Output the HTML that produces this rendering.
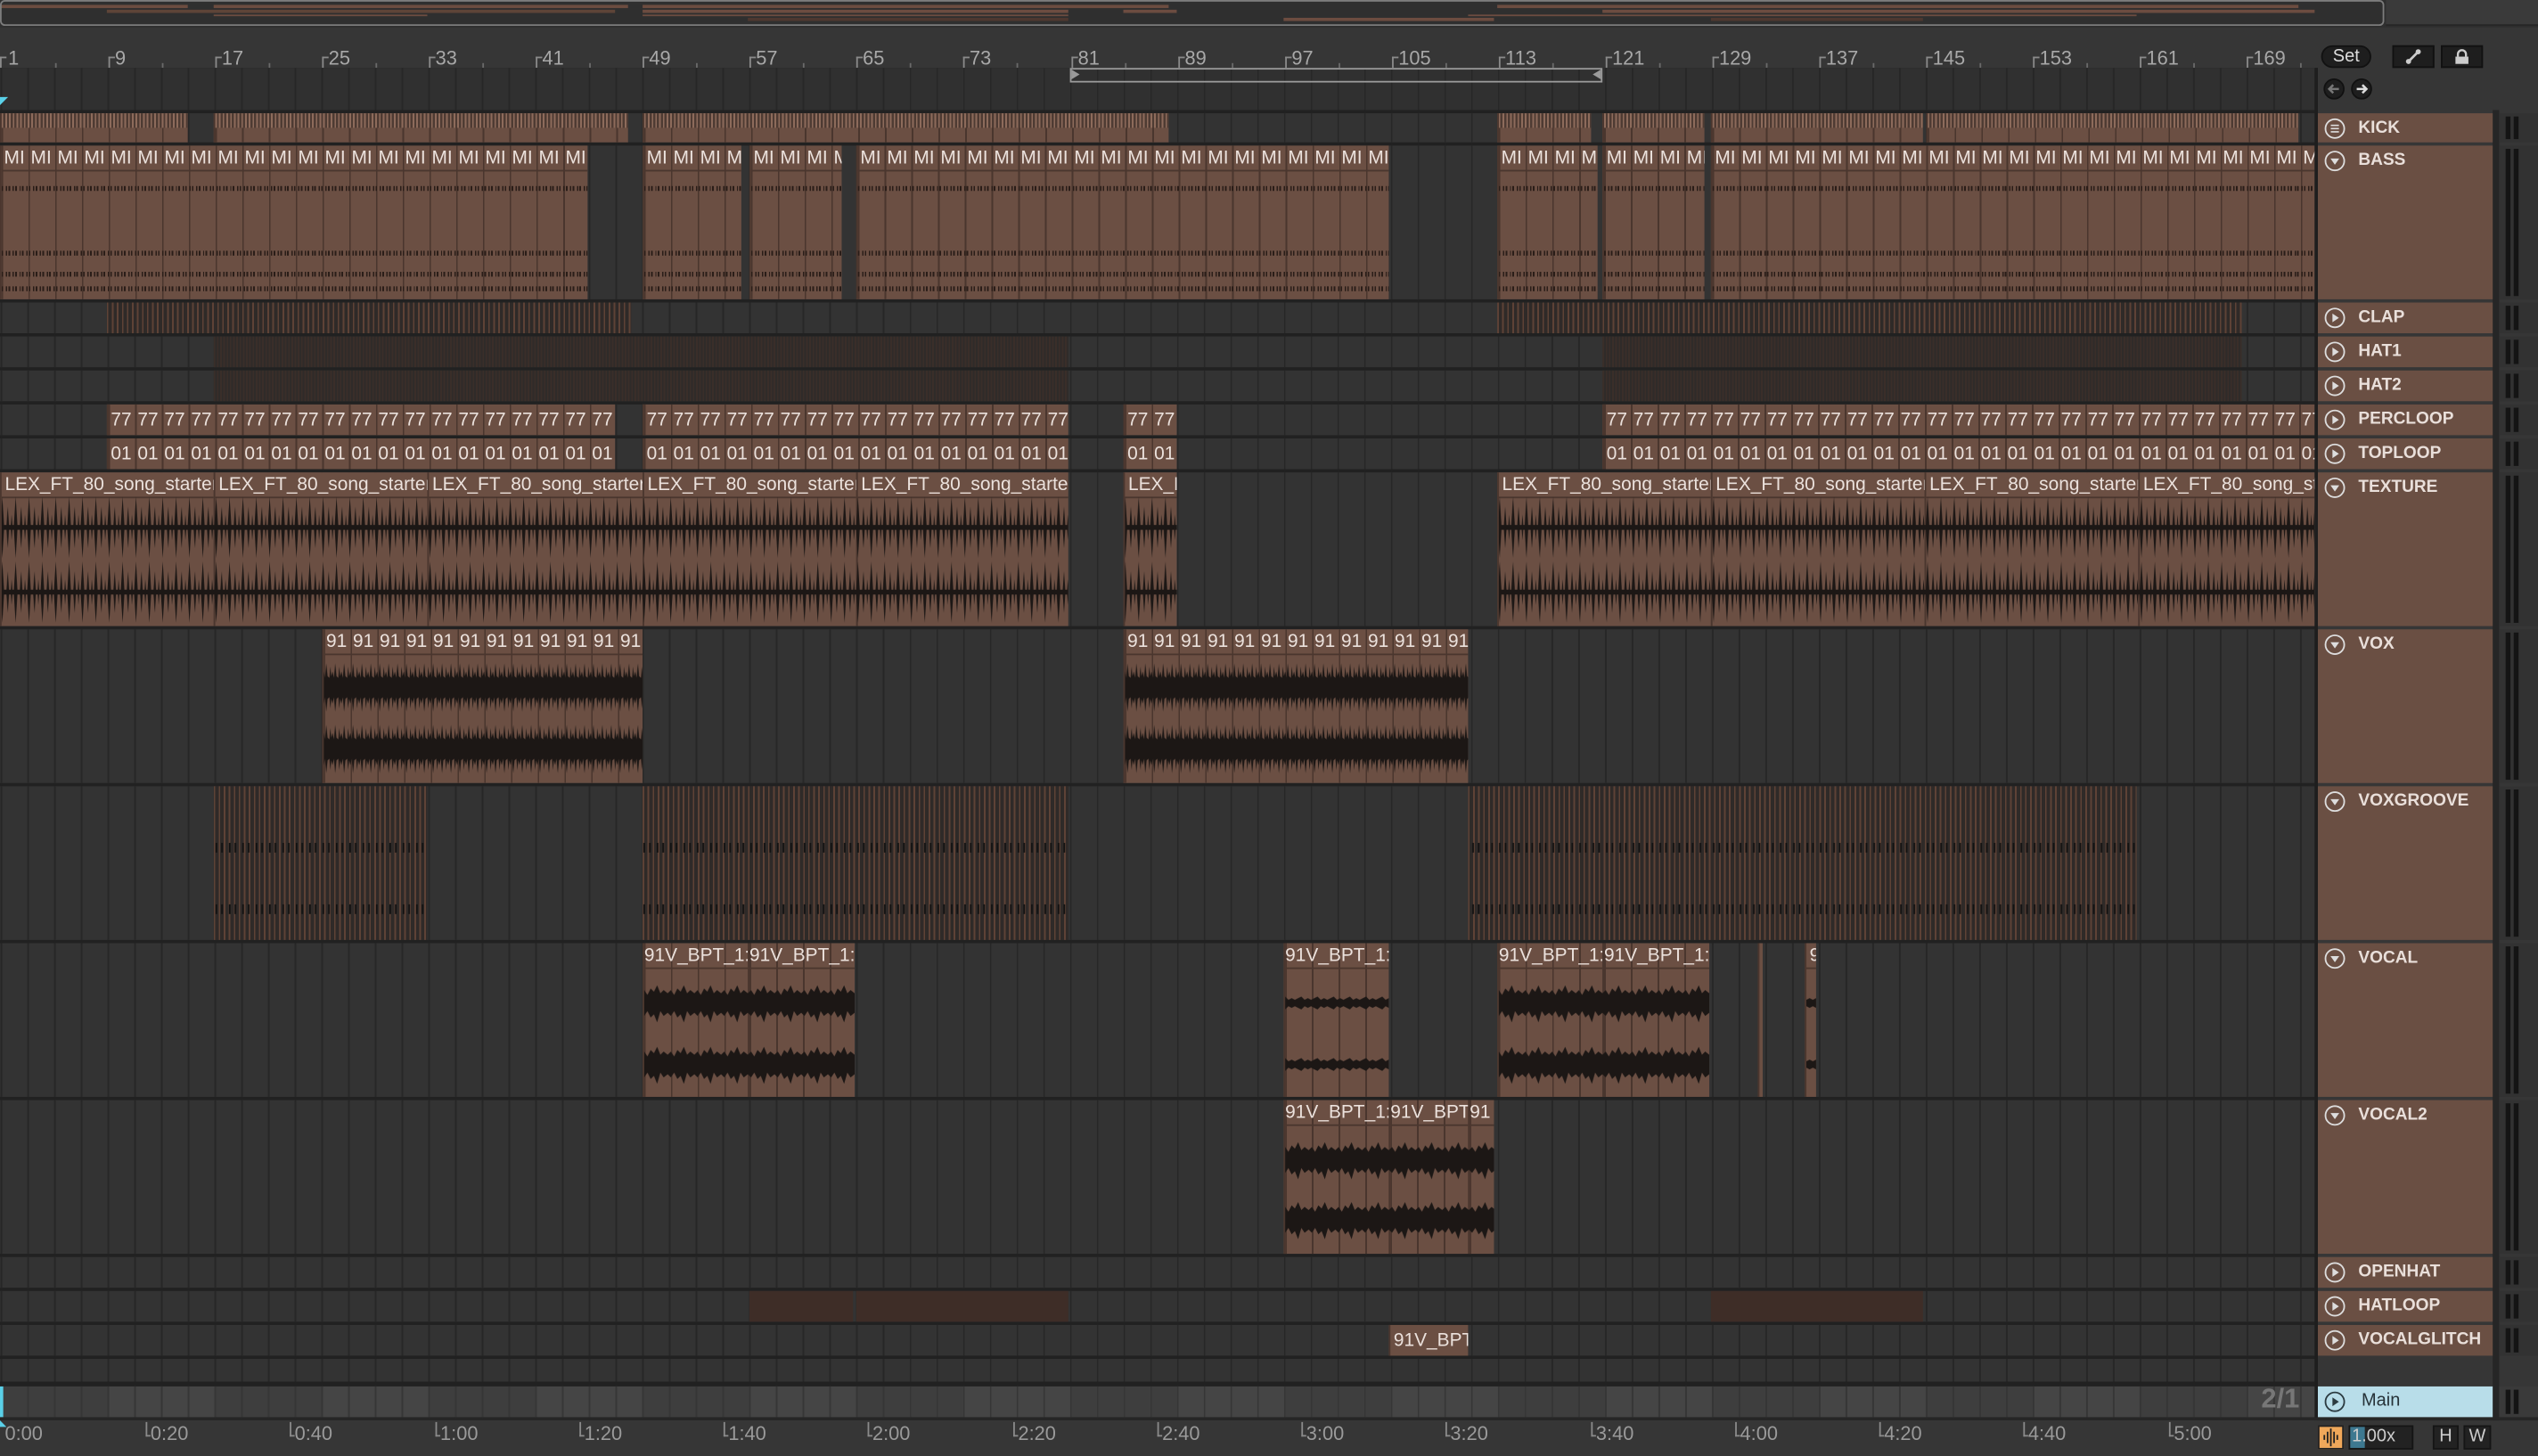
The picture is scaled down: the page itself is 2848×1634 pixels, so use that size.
<!DOCTYPE html>
<html><head><meta charset="utf-8">
<style>
html,body{margin:0;padding:0;background:#363636;width:2848px;height:1634px;overflow:hidden}
#w{position:absolute;left:0;top:0;width:1568px;height:900px;transform:scale(1.81633,1.81556);transform-origin:0 0;font-family:"Liberation Sans",sans-serif;background:#363636;overflow:hidden}
.a{position:absolute}
.lane{position:absolute;left:0;width:1430px;background-color:#333;background-image:repeating-linear-gradient(90deg,#272727 0 1px,transparent 1px 16.52px);background-position:0.3px 0}
.c{position:absolute;background-color:#6b4f43;overflow:hidden;box-sizing:border-box;border-left:1px solid #4a362e}
.m{background-image:repeating-linear-gradient(90deg,#4a362e 0 1px,transparent 1px 16.52px)}
.h{height:15px;line-height:16px;font-size:11.5px;color:#ebe1dc;white-space:nowrap;border-bottom:1px solid #4a362e;overflow:hidden;padding-left:2px}
.m .h{padding-left:0}
.h i{font-style:normal;display:inline-block;width:16.52px;padding-left:1.5px;box-sizing:border-box;overflow:hidden}
.s .h{height:19px;line-height:20px;border:0}
.d{position:absolute;left:0;right:0;height:3px;background:repeating-linear-gradient(90deg,#2a1d18 0 1px,transparent 1px 2.6px,#2a1d18 2.6px 3.4px,transparent 3.4px 4.2px)}
.kt{position:absolute;left:0;right:0;top:0;height:9px;background:repeating-linear-gradient(90deg,#8d6b5b 0 1px,#4e3b33 1px 2.3px)}
.faint{position:absolute;background:repeating-linear-gradient(90deg,#5e4236 0 1px,#2f2a28 1px 3.1px)}
.faint2{position:absolute;background:repeating-linear-gradient(90deg,#3a2e29 0 1px,#2f2b29 1px 2px)}
.hd{position:absolute;left:1432px;width:108px;background:#6a4f43;color:#e9dfda;font-weight:bold;font-size:10.5px;box-sizing:border-box;padding-left:25px}
.hd svg{position:absolute;left:4px;top:3px}
.hd span{position:absolute;top:3px;line-height:13px}
.mt{position:absolute;left:1544px;width:24px;background:#323232}
.mt:before,.mt:after{content:"";position:absolute;top:2px;bottom:2px;width:3px;background:#141414}
.mt:before{left:4px}.mt:after{left:8.5px}
.rl{position:absolute;top:29px;font-size:12px;color:#a8a8a8}
.rt{position:absolute;top:35px;width:4px;height:7px;border-left:1px solid #8a8a8a;border-top:1px solid #8a8a8a;box-sizing:border-box}
.st{position:absolute;top:39px;width:1px;height:3px;background:#6a6a6a}
.tl{position:absolute;top:879px;font-size:12px;color:#9a9a9a}
.tt{position:absolute;top:879px;width:3px;height:9px;border-left:1px solid #8a8a8a;border-bottom:1px solid #8a8a8a;box-sizing:border-box}
.ov{position:absolute;height:2px;background:#6c4c40}
</style></head><body><div id="w">

<!-- overview -->
<div class="a" style="left:0;top:0;width:1568px;height:17px;background:#2f2f2f"></div>
<div class="a" style="left:1474px;top:0;width:94px;height:15px;background:#3a3a3a;border-bottom:1px solid #262626"></div>
<div class="ov" style="left:0;top:3px;width:116px"></div><div class="ov" style="left:132px;top:3px;width:256px"></div><div class="ov" style="left:397px;top:3px;width:325px"></div><div class="ov" style="left:925px;top:3px;width:495px"></div>
<div class="ov" style="left:66px;top:6px;width:314px;height:2px;background:#5e4438"></div><div class="ov" style="left:397px;top:6px;width:263px"></div><div class="ov" style="left:694px;top:6px;width:33px"></div><div class="ov" style="left:990px;top:6px;width:440px"></div>
<div class="ov" style="left:132px;top:9px;width:132px;height:1px"></div><div class="ov" style="left:397px;top:9px;width:263px;height:1px"></div><div class="ov" style="left:907px;top:9px;width:413px;height:1px"></div>
<div class="ov" style="left:462px;top:11px;width:198px;height:2px;background:#4d3830"></div><div class="ov" style="left:793px;top:11px;width:130px;height:2px"></div><div class="ov" style="left:1057px;top:11px;width:131px;height:2px;background:#4d3830"></div>
<div class="a" style="left:0;top:0;width:1471px;height:14px;border:1.5px solid #7c7c7c;border-radius:3px"></div>

<!-- ruler -->
<div class="a" style="left:0;top:17px;width:1432px;height:25px;background:#363636"></div>
<div class="rt" style="left:0px"></div><div class="rl" style="left:5px">1</div>
<div class="rt" style="left:66.6px"></div><div class="rl" style="left:71px">9</div>
<div class="rt" style="left:132.7px"></div><div class="rl" style="left:137px">17</div>
<div class="rt" style="left:198.8px"></div><div class="rl" style="left:203px">25</div>
<div class="rt" style="left:264.9px"></div><div class="rl" style="left:269px">33</div>
<div class="rt" style="left:331px"></div><div class="rl" style="left:335px">41</div>
<div class="rt" style="left:397px"></div><div class="rl" style="left:401px">49</div>
<div class="rt" style="left:463px"></div><div class="rl" style="left:467px">57</div>
<div class="rt" style="left:529px"></div><div class="rl" style="left:533px">65</div>
<div class="rt" style="left:595px"></div><div class="rl" style="left:599px">73</div>
<div class="rt" style="left:661.5px"></div><div class="rl" style="left:666px">81</div>
<div class="rt" style="left:727.6px"></div><div class="rl" style="left:732px">89</div>
<div class="rt" style="left:793.7px"></div><div class="rl" style="left:798px">97</div>
<div class="rt" style="left:859.8px"></div><div class="rl" style="left:864px">105</div>
<div class="rt" style="left:925.9px"></div><div class="rl" style="left:930px">113</div>
<div class="rt" style="left:992px"></div><div class="rl" style="left:996px">121</div>
<div class="rt" style="left:1058px"></div><div class="rl" style="left:1062px">129</div>
<div class="rt" style="left:1124px"></div><div class="rl" style="left:1128px">137</div>
<div class="rt" style="left:1190px"></div><div class="rl" style="left:1194px">145</div>
<div class="rt" style="left:1256px"></div><div class="rl" style="left:1260px">153</div>
<div class="rt" style="left:1322px"></div><div class="rl" style="left:1326px">161</div>
<div class="rt" style="left:1388px"></div><div class="rl" style="left:1392px">169</div>
<div class="st" style="left:33.5px"></div><div class="st" style="left:99.6px"></div><div class="st" style="left:165.7px"></div><div class="st" style="left:231.8px"></div><div class="st" style="left:298px"></div><div class="st" style="left:364px"></div><div class="st" style="left:430px"></div><div class="st" style="left:496px"></div><div class="st" style="left:562px"></div><div class="st" style="left:628px"></div><div class="st" style="left:694.5px"></div><div class="st" style="left:760.6px"></div><div class="st" style="left:826.7px"></div><div class="st" style="left:892.8px"></div><div class="st" style="left:959px"></div><div class="st" style="left:1025px"></div><div class="st" style="left:1091px"></div><div class="st" style="left:1157px"></div><div class="st" style="left:1223px"></div><div class="st" style="left:1289px"></div><div class="st" style="left:1355px"></div><div class="st" style="left:1421px"></div>

<!-- arrangement bg -->
<div class="a" style="left:0;top:42px;width:1432px;height:836px;background:#212121"></div>
<div class="lane" style="top:42px;height:26px;background-color:#303030"></div>
<div class="lane" style="top:70px;height:18px"></div>
<div class="lane" style="top:90px;height:95px"></div>
<div class="lane" style="top:187px;height:19px"></div>
<div class="lane" style="top:208px;height:19px"></div>
<div class="lane" style="top:229px;height:19px"></div>
<div class="lane" style="top:250px;height:19px"></div>
<div class="lane" style="top:271px;height:19px"></div>
<div class="lane" style="top:292px;height:95px"></div>
<div class="lane" style="top:389px;height:95px"></div>
<div class="lane" style="top:486px;height:95px"></div>
<div class="lane" style="top:583px;height:95px"></div>
<div class="lane" style="top:680px;height:95px"></div>
<div class="lane" style="top:777px;height:19px"></div>
<div class="lane" style="top:798px;height:19px"></div>
<div class="lane" style="top:819px;height:19px"></div>
<div class="lane" style="top:840px;height:14px"></div>
<div class="lane" style="top:857px;height:19px;background-color:#424242;background-image:repeating-linear-gradient(90deg,#363636 0 1px,transparent 1px 16.52px),repeating-linear-gradient(90deg,#3e3e3e 0 66.08px,#454545 66.08px 132.16px)"></div>
<div class="a" style="left:0;top:857px;width:2px;height:19px;background:#5ad0e8"></div>
<div class="a" style="left:1397px;top:855px;font-size:17px;font-weight:bold;color:#777">2/1</div>
<div class="a" style="left:0;top:60px;width:0;height:0;border-left:5px solid #5ad0e8;border-bottom:5px solid transparent"></div>

<!-- loop brace -->
<div class="a" style="left:661px;top:42px;width:329px;height:9px;border:1px solid #9a9a9a;box-sizing:border-box"></div>
<div class="a" style="left:662px;top:43px;width:0;height:0;border-left:5px solid #9a9a9a;border-top:3.5px solid transparent;border-bottom:3.5px solid transparent"></div>
<div class="a" style="left:984px;top:43px;width:0;height:0;border-right:5px solid #9a9a9a;border-top:3.5px solid transparent;border-bottom:3.5px solid transparent"></div>

<!-- KICK -->
<div class="c m" style="left:0;top:70px;width:116px;height:18px"><div class="kt"></div></div>
<div class="c m" style="left:132px;top:70px;width:256px;height:18px"><div class="kt"></div></div>
<div class="c m" style="left:397px;top:70px;width:325px;height:18px"><div class="kt"></div></div>
<div class="c m" style="left:925px;top:70px;width:58px;height:18px"><div class="kt"></div></div>
<div class="c m" style="left:990px;top:70px;width:63px;height:18px"><div class="kt"></div></div>
<div class="c m" style="left:1057px;top:70px;width:131px;height:18px"><div class="kt"></div></div>
<div class="c m" style="left:1190px;top:70px;width:230px;height:18px"><div class="kt"></div></div>

<!-- BASS -->
<div class="c m" style="left:0;top:90px;width:363px;height:95px"><div class="h"><i>MI</i><i>MI</i><i>MI</i><i>MI</i><i>MI</i><i>MI</i><i>MI</i><i>MI</i><i>MI</i><i>MI</i><i>MI</i><i>MI</i><i>MI</i><i>MI</i><i>MI</i><i>MI</i><i>MI</i><i>MI</i><i>MI</i><i>MI</i><i>MI</i><i>MI</i></div><div class="d" style="top:25px"></div><div class="d" style="top:65px"></div><div class="d" style="top:78px"></div><div class="d" style="top:87px"></div></div>
<div class="c m" style="left:397px;top:90px;width:61px;height:95px"><div class="h"><i>MI</i><i>MI</i><i>MI</i><i>MI</i></div><div class="d" style="top:25px"></div><div class="d" style="top:65px"></div><div class="d" style="top:78px"></div><div class="d" style="top:87px"></div></div>
<div class="c m" style="left:463px;top:90px;width:57px;height:95px"><div class="h"><i>MI</i><i>MI</i><i>MI</i><i>MI</i></div><div class="d" style="top:25px"></div><div class="d" style="top:65px"></div><div class="d" style="top:78px"></div><div class="d" style="top:87px"></div></div>
<div class="c m" style="left:529px;top:90px;width:329px;height:95px"><div class="h"><i>MI</i><i>MI</i><i>MI</i><i>MI</i><i>MI</i><i>MI</i><i>MI</i><i>MI</i><i>MI</i><i>MI</i><i>MI</i><i>MI</i><i>MI</i><i>MI</i><i>MI</i><i>MI</i><i>MI</i><i>MI</i><i>MI</i><i>MI</i></div><div class="d" style="top:25px"></div><div class="d" style="top:65px"></div><div class="d" style="top:78px"></div><div class="d" style="top:87px"></div></div>
<div class="c m" style="left:925px;top:90px;width:62px;height:95px"><div class="h"><i>MI</i><i>MI</i><i>MI</i><i>MI</i></div><div class="d" style="top:25px"></div><div class="d" style="top:65px"></div><div class="d" style="top:78px"></div><div class="d" style="top:87px"></div></div>
<div class="c m" style="left:990px;top:90px;width:63px;height:95px"><div class="h"><i>MI</i><i>MI</i><i>MI</i><i>MI</i></div><div class="d" style="top:25px"></div><div class="d" style="top:65px"></div><div class="d" style="top:78px"></div><div class="d" style="top:87px"></div></div>
<div class="c m" style="left:1057px;top:90px;width:373px;height:95px"><div class="h"><i>MI</i><i>MI</i><i>MI</i><i>MI</i><i>MI</i><i>MI</i><i>MI</i><i>MI</i><i>MI</i><i>MI</i><i>MI</i><i>MI</i><i>MI</i><i>MI</i><i>MI</i><i>MI</i><i>MI</i><i>MI</i><i>MI</i><i>MI</i><i>MI</i><i>MI</i><i>MI</i></div><div class="d" style="top:25px"></div><div class="d" style="top:65px"></div><div class="d" style="top:78px"></div><div class="d" style="top:87px"></div></div>

<!-- CLAP / HAT1 / HAT2 faint -->
<div class="faint" style="left:66px;top:187px;width:324px;height:19px"></div>
<div class="faint" style="left:925px;top:187px;width:460px;height:19px"></div>
<div class="faint2" style="left:132px;top:208px;width:528px;height:19px"></div>
<div class="faint2" style="left:990px;top:208px;width:395px;height:19px"></div>
<div class="faint2" style="left:132px;top:229px;width:528px;height:19px"></div>
<div class="faint2" style="left:990px;top:229px;width:395px;height:19px"></div>

<!-- PERCLOOP -->
<div class="c m s" style="left:66px;top:250px;width:314px;height:19px"><div class="h"><i>77</i><i>77</i><i>77</i><i>77</i><i>77</i><i>77</i><i>77</i><i>77</i><i>77</i><i>77</i><i>77</i><i>77</i><i>77</i><i>77</i><i>77</i><i>77</i><i>77</i><i>77</i><i>77</i></div></div>
<div class="c m s" style="left:397px;top:250px;width:263px;height:19px"><div class="h"><i>77</i><i>77</i><i>77</i><i>77</i><i>77</i><i>77</i><i>77</i><i>77</i><i>77</i><i>77</i><i>77</i><i>77</i><i>77</i><i>77</i><i>77</i><i>77</i></div></div>
<div class="c m s" style="left:694px;top:250px;width:33px;height:19px"><div class="h"><i>77</i><i>77</i></div></div>
<div class="c m s" style="left:990px;top:250px;width:440px;height:19px"><div class="h"><i>77</i><i>77</i><i>77</i><i>77</i><i>77</i><i>77</i><i>77</i><i>77</i><i>77</i><i>77</i><i>77</i><i>77</i><i>77</i><i>77</i><i>77</i><i>77</i><i>77</i><i>77</i><i>77</i><i>77</i><i>77</i><i>77</i><i>77</i><i>77</i><i>77</i><i>77</i><i>77</i></div></div>

<!-- TOPLOOP -->
<div class="c m s" style="left:66px;top:271px;width:314px;height:19px"><div class="h"><i>01</i><i>01</i><i>01</i><i>01</i><i>01</i><i>01</i><i>01</i><i>01</i><i>01</i><i>01</i><i>01</i><i>01</i><i>01</i><i>01</i><i>01</i><i>01</i><i>01</i><i>01</i><i>01</i></div></div>
<div class="c m s" style="left:397px;top:271px;width:263px;height:19px"><div class="h"><i>01</i><i>01</i><i>01</i><i>01</i><i>01</i><i>01</i><i>01</i><i>01</i><i>01</i><i>01</i><i>01</i><i>01</i><i>01</i><i>01</i><i>01</i><i>01</i></div></div>
<div class="c m s" style="left:694px;top:271px;width:33px;height:19px"><div class="h"><i>01</i><i>01</i></div></div>
<div class="c m s" style="left:990px;top:271px;width:440px;height:19px"><div class="h"><i>01</i><i>01</i><i>01</i><i>01</i><i>01</i><i>01</i><i>01</i><i>01</i><i>01</i><i>01</i><i>01</i><i>01</i><i>01</i><i>01</i><i>01</i><i>01</i><i>01</i><i>01</i><i>01</i><i>01</i><i>01</i><i>01</i><i>01</i><i>01</i><i>01</i><i>01</i><i>01</i></div></div>

<!-- TEXTURE -->
<div class="c" style="left:0;top:292px;width:132px;height:95px"><div class="h">LEX_FT_80_song_starter</div></div>
<div class="c" style="left:132px;top:292px;width:132px;height:95px"><div class="h">LEX_FT_80_song_starter</div></div>
<div class="c" style="left:264px;top:292px;width:133px;height:95px"><div class="h">LEX_FT_80_song_starter</div></div>
<div class="c" style="left:397px;top:292px;width:132px;height:95px"><div class="h">LEX_FT_80_song_starter</div></div>
<div class="c" style="left:529px;top:292px;width:131px;height:95px"><div class="h">LEX_FT_80_song_starter</div></div>
<div class="c" style="left:694px;top:292px;width:33px;height:95px"><div class="h">LEX_FT_80</div></div>
<div class="c" style="left:925px;top:292px;width:132px;height:95px"><div class="h">LEX_FT_80_song_starter</div></div>
<div class="c" style="left:1057px;top:292px;width:132px;height:95px"><div class="h">LEX_FT_80_song_starter</div></div>
<div class="c" style="left:1189px;top:292px;width:132px;height:95px"><div class="h">LEX_FT_80_song_starter</div></div>
<div class="c" style="left:1321px;top:292px;width:109px;height:95px"><div class="h">LEX_FT_80_song_starter</div></div>

<!-- VOX -->
<div class="c m" style="left:199px;top:389px;width:198px;height:95px"><div class="h"><i>91</i><i>91</i><i>91</i><i>91</i><i>91</i><i>91</i><i>91</i><i>91</i><i>91</i><i>91</i><i>91</i><i>91</i></div></div>
<div class="c m" style="left:694px;top:389px;width:213px;height:95px"><div class="h"><i>91</i><i>91</i><i>91</i><i>91</i><i>91</i><i>91</i><i>91</i><i>91</i><i>91</i><i>91</i><i>91</i><i>91</i><i>91</i></div></div>

<!-- VOXGROOVE -->
<div class="faint" style="left:132px;top:486px;width:132px;height:95px"></div>
<div class="faint" style="left:397px;top:486px;width:263px;height:95px"></div>
<div class="faint" style="left:907px;top:486px;width:413px;height:95px"></div>

<!-- VOCAL -->
<div class="c m" style="left:397px;top:583px;width:65px;height:95px"><div class="h">91V_BPT_1:</div></div>
<div class="c m" style="left:462px;top:583px;width:66px;height:95px"><div class="h">91V_BPT_1:</div></div>
<div class="c m" style="left:793px;top:583px;width:65px;height:95px"><div class="h">91V_BPT_1:</div></div>
<div class="c m" style="left:925px;top:583px;width:65px;height:95px"><div class="h">91V_BPT_1:</div></div>
<div class="c m" style="left:990px;top:583px;width:66px;height:95px"><div class="h">91V_BPT_1:</div></div>
<div class="c" style="left:1086px;top:583px;width:3px;height:95px"></div>
<div class="c" style="left:1115px;top:583px;width:7px;height:95px"><div class="h">9</div></div>

<!-- VOCAL2 -->
<div class="c m" style="left:793px;top:680px;width:65px;height:95px"><div class="h">91V_BPT_1:</div></div>
<div class="c m" style="left:858px;top:680px;width:49px;height:95px"><div class="h">91V_BPT</div></div>
<div class="c m" style="left:907px;top:680px;width:16px;height:95px"><div class="h">91</div></div>

<!-- HATLOOP -->
<div class="a" style="left:463px;top:798px;width:64px;height:19px;background:#3e2d27"></div>
<div class="a" style="left:529px;top:798px;width:131px;height:19px;background:#3e2d27"></div>
<div class="a" style="left:1057px;top:798px;width:131px;height:19px;background:#3e2d27"></div>

<!-- VOCALGLITCH -->
<div class="c s" style="left:858px;top:819px;width:49px;height:19px"><div class="h">91V_BPT</div></div>

<!-- waveforms -->
<svg class="a" style="left:0;top:0" width="1430" height="900" viewBox="0 0 1430 900">
<defs>
<pattern id="spk" width="8.26" height="42" patternUnits="userSpaceOnUse"><rect y="19.5" width="8.26" height="3" fill="#1c1715"/><path d="M1.4 2L2.6 21L1.4 40L0.2 21Z M4.8 8L5.7 21L4.8 34L3.9 21Z M7.2 13L7.8 21L7.2 29L6.6 21Z" fill="#1c1715"/></pattern>
<pattern id="vox" width="5.5" height="38" patternUnits="userSpaceOnUse"><path d="M0 13L0.6 6L1.2 12L2 9L2.8 13L3.6 4L4.4 12L5.5 13V25L4.4 26L3.6 34L2.8 25L2 29L1.2 26L0.6 32L0 25Z" fill="#1c1715"/></pattern>
<pattern id="voc" width="16.5" height="34" patternUnits="userSpaceOnUse"><path d="M0 11L2 9L4 12L6 8L8 10L10 6L12 11L14 9L16.5 11V23L14 25L12 22L10 29L8 24L6 26L4 22L2 25L0 23Z" fill="#1c1715"/></pattern>
<pattern id="vt" width="10" height="34" patternUnits="userSpaceOnUse"><path d="M0 15L2 14L4 13L6 15L8 14L10 15V19L8 20L6 19L4 21L2 20L0 19Z" fill="#1c1715"/></pattern>
<pattern id="grv" width="8.26" height="6" patternUnits="userSpaceOnUse"><rect x="1" width="1" height="6" fill="#111"/><rect x="4.5" width="1" height="6" fill="#111"/></pattern>
</defs>
<g transform="translate(0,305)"><rect x="1" width="659" height="42" fill="url(#spk)"/><rect x="695" width="32" height="42" fill="url(#spk)"/><rect x="926" width="504" height="42" fill="url(#spk)"/></g>
<g transform="translate(0,345)"><rect x="1" width="659" height="42" fill="url(#spk)"/><rect x="695" width="32" height="42" fill="url(#spk)"/><rect x="926" width="504" height="42" fill="url(#spk)"/></g>
<g transform="translate(0,406)"><rect x="200" width="197" height="38" fill="url(#vox)"/><rect x="695" width="212" height="38" fill="url(#vox)"/></g>
<g transform="translate(0,444)"><rect x="200" width="197" height="38" fill="url(#vox)"/><rect x="695" width="212" height="38" fill="url(#vox)"/></g>
<g transform="translate(0,521)"><rect x="132" width="132" height="6" fill="url(#grv)"/><rect x="397" width="263" height="6" fill="url(#grv)"/><rect x="907" width="413" height="6" fill="url(#grv)"/></g>
<g transform="translate(0,559)"><rect x="132" width="132" height="6" fill="url(#grv)"/><rect x="397" width="263" height="6" fill="url(#grv)"/><rect x="907" width="413" height="6" fill="url(#grv)"/></g>
<g transform="translate(0,603)"><rect x="398" width="130" height="34" fill="url(#voc)"/><rect x="794" width="64" height="34" fill="url(#vt)"/><rect x="926" width="130" height="34" fill="url(#voc)"/><rect x="1116" width="6" height="34" fill="url(#vt)"/></g>
<g transform="translate(0,641)"><rect x="398" width="130" height="34" fill="url(#voc)"/><rect x="794" width="64" height="34" fill="url(#vt)"/><rect x="926" width="130" height="34" fill="url(#voc)"/><rect x="1116" width="6" height="34" fill="url(#vt)"/></g>
<g transform="translate(0,700)"><rect x="794" width="129" height="34" fill="url(#voc)"/></g>
<g transform="translate(0,737)"><rect x="794" width="129" height="34" fill="url(#voc)"/></g>
</svg>

<!-- right divider -->
<div class="a" style="left:1430px;top:42px;width:2px;height:836px;background:#1e1e1e"></div>
<div class="a" style="left:1540px;top:68px;width:4px;height:810px;background:#262626"></div>

<!-- top right controls -->
<div class="a" style="left:1434px;top:28px;width:31px;height:14px;border-radius:7px;background:#1e1e1e;border:1px solid #111;box-sizing:border-box;color:#ddd;font-size:11px;line-height:13px;text-align:center">Set</div>
<div class="a" style="left:1478px;top:28px;width:26px;height:14px;background:#1e1e1e;border:1px solid #111;box-sizing:border-box"><svg width="24" height="12" style="position:absolute;left:0;top:0"><path d="M9 9L15 3" stroke="#ccc" stroke-width="1.5"/><circle cx="9" cy="9" r="1.6" fill="#ccc"/><circle cx="15" cy="3" r="1.6" fill="#ccc"/></svg></div>
<div class="a" style="left:1508px;top:28px;width:26px;height:14px;background:#1e1e1e;border:1px solid #111;box-sizing:border-box"><svg width="24" height="12" style="position:absolute;left:0;top:0"><path d="M9.5 6V4.5a2.5 2.5 0 0 1 5 0V6" stroke="#ccc" stroke-width="1.3" fill="none"/><rect x="8" y="6" width="8" height="4.5" fill="#ccc"/></svg></div>
<svg class="a" style="left:1434px;top:48px" width="34" height="14"><circle cx="8" cy="7" r="6" fill="#1e1e1e" stroke="#111"/><path d="M11 7H5M7.5 4.5L5 7L7.5 9.5" stroke="#777" stroke-width="1.4" fill="none"/><circle cx="25" cy="7" r="6" fill="#1e1e1e" stroke="#111"/><path d="M22 7H28M25.5 4.5L28 7L25.5 9.5" stroke="#ddd" stroke-width="1.4" fill="none"/></svg>

<!-- track headers -->
<div class="hd" style="top:70px;height:18px"><svg width="13" height="13"><circle cx="6.5" cy="6.5" r="5.8" fill="none" stroke="#ddd" stroke-width="1"/><path d="M4 4.5H9M4 6.5H9M4 8.5H9" stroke="#ddd" stroke-width="0.9"/></svg><span>KICK</span></div><div class="mt" style="top:70px;height:18px"></div>
<div class="hd" style="top:90px;height:95px"><svg width="13" height="13"><circle cx="6.5" cy="6.5" r="5.8" fill="none" stroke="#ddd" stroke-width="1"/><path d="M3.8 5H9.2L6.5 8.8Z" fill="#ddd"/></svg><span>BASS</span></div><div class="mt" style="top:90px;height:95px"></div>
<div class="hd" style="top:187px;height:19px"><svg width="13" height="13"><circle cx="6.5" cy="6.5" r="5.8" fill="none" stroke="#ddd" stroke-width="1"/><path d="M5 3.8V9.2L9 6.5Z" fill="#ddd"/></svg><span>CLAP</span></div><div class="mt" style="top:187px;height:19px"></div>
<div class="hd" style="top:208px;height:19px"><svg width="13" height="13"><circle cx="6.5" cy="6.5" r="5.8" fill="none" stroke="#ddd" stroke-width="1"/><path d="M5 3.8V9.2L9 6.5Z" fill="#ddd"/></svg><span>HAT1</span></div><div class="mt" style="top:208px;height:19px"></div>
<div class="hd" style="top:229px;height:19px"><svg width="13" height="13"><circle cx="6.5" cy="6.5" r="5.8" fill="none" stroke="#ddd" stroke-width="1"/><path d="M5 3.8V9.2L9 6.5Z" fill="#ddd"/></svg><span>HAT2</span></div><div class="mt" style="top:229px;height:19px"></div>
<div class="hd" style="top:250px;height:19px"><svg width="13" height="13"><circle cx="6.5" cy="6.5" r="5.8" fill="none" stroke="#ddd" stroke-width="1"/><path d="M5 3.8V9.2L9 6.5Z" fill="#ddd"/></svg><span>PERCLOOP</span></div><div class="mt" style="top:250px;height:19px"></div>
<div class="hd" style="top:271px;height:19px"><svg width="13" height="13"><circle cx="6.5" cy="6.5" r="5.8" fill="none" stroke="#ddd" stroke-width="1"/><path d="M5 3.8V9.2L9 6.5Z" fill="#ddd"/></svg><span>TOPLOOP</span></div><div class="mt" style="top:271px;height:19px"></div>
<div class="hd" style="top:292px;height:95px"><svg width="13" height="13"><circle cx="6.5" cy="6.5" r="5.8" fill="none" stroke="#ddd" stroke-width="1"/><path d="M3.8 5H9.2L6.5 8.8Z" fill="#ddd"/></svg><span>TEXTURE</span></div><div class="mt" style="top:292px;height:95px"></div>
<div class="hd" style="top:389px;height:95px"><svg width="13" height="13"><circle cx="6.5" cy="6.5" r="5.8" fill="none" stroke="#ddd" stroke-width="1"/><path d="M3.8 5H9.2L6.5 8.8Z" fill="#ddd"/></svg><span>VOX</span></div><div class="mt" style="top:389px;height:95px"></div>
<div class="hd" style="top:486px;height:95px"><svg width="13" height="13"><circle cx="6.5" cy="6.5" r="5.8" fill="none" stroke="#ddd" stroke-width="1"/><path d="M3.8 5H9.2L6.5 8.8Z" fill="#ddd"/></svg><span>VOXGROOVE</span></div><div class="mt" style="top:486px;height:95px"></div>
<div class="hd" style="top:583px;height:95px"><svg width="13" height="13"><circle cx="6.5" cy="6.5" r="5.8" fill="none" stroke="#ddd" stroke-width="1"/><path d="M3.8 5H9.2L6.5 8.8Z" fill="#ddd"/></svg><span>VOCAL</span></div><div class="mt" style="top:583px;height:95px"></div>
<div class="hd" style="top:680px;height:95px"><svg width="13" height="13"><circle cx="6.5" cy="6.5" r="5.8" fill="none" stroke="#ddd" stroke-width="1"/><path d="M3.8 5H9.2L6.5 8.8Z" fill="#ddd"/></svg><span>VOCAL2</span></div><div class="mt" style="top:680px;height:95px"></div>
<div class="hd" style="top:777px;height:19px"><svg width="13" height="13"><circle cx="6.5" cy="6.5" r="5.8" fill="none" stroke="#ddd" stroke-width="1"/><path d="M5 3.8V9.2L9 6.5Z" fill="#ddd"/></svg><span>OPENHAT</span></div><div class="mt" style="top:777px;height:19px"></div>
<div class="hd" style="top:798px;height:19px"><svg width="13" height="13"><circle cx="6.5" cy="6.5" r="5.8" fill="none" stroke="#ddd" stroke-width="1"/><path d="M5 3.8V9.2L9 6.5Z" fill="#ddd"/></svg><span>HATLOOP</span></div><div class="mt" style="top:798px;height:19px"></div>
<div class="hd" style="top:819px;height:19px"><svg width="13" height="13"><circle cx="6.5" cy="6.5" r="5.8" fill="none" stroke="#ddd" stroke-width="1"/><path d="M5 3.8V9.2L9 6.5Z" fill="#ddd"/></svg><span>VOCALGLITCH</span></div><div class="mt" style="top:819px;height:19px"></div>
<div class="hd" style="top:857px;height:19px;background:#b8dde9;color:#263238;font-weight:normal;padding-left:27px"><svg width="13" height="13"><circle cx="6.5" cy="6.5" r="5.8" fill="none" stroke="#2b3a40" stroke-width="1"/><path d="M5 3.8V9.2L9 6.5Z" fill="#2b3a40"/></svg><span style="font-size:11px">Main</span></div><div class="mt" style="top:857px;height:19px;background:#3a3a3a"></div>

<!-- bottom time ruler -->
<div class="a" style="left:0;top:876px;width:1568px;height:2px;background:#262626"></div>
<div class="a" style="left:0;top:878px;width:1432px;height:22px;background:#363636"></div>
<div class="a" style="left:0;top:878px;width:0;height:0;border-left:4px solid #5ad0e8;border-top:4px solid transparent"></div>
<div class="tl" style="left:3px">0:00</div>
<div class="tt" style="left:90px"></div><div class="tl" style="left:93px">0:20</div>
<div class="tt" style="left:179px"></div><div class="tl" style="left:182px">0:40</div>
<div class="tt" style="left:269px"></div><div class="tl" style="left:272px">1:00</div>
<div class="tt" style="left:358px"></div><div class="tl" style="left:361px">1:20</div>
<div class="tt" style="left:447px"></div><div class="tl" style="left:450px">1:40</div>
<div class="tt" style="left:536px"></div><div class="tl" style="left:539px">2:00</div>
<div class="tt" style="left:626px"></div><div class="tl" style="left:629px">2:20</div>
<div class="tt" style="left:715px"></div><div class="tl" style="left:718px">2:40</div>
<div class="tt" style="left:804px"></div><div class="tl" style="left:807px">3:00</div>
<div class="tt" style="left:893px"></div><div class="tl" style="left:896px">3:20</div>
<div class="tt" style="left:983px"></div><div class="tl" style="left:986px">3:40</div>
<div class="tt" style="left:1072px"></div><div class="tl" style="left:1075px">4:00</div>
<div class="tt" style="left:1161px"></div><div class="tl" style="left:1164px">4:20</div>
<div class="tt" style="left:1250px"></div><div class="tl" style="left:1253px">4:40</div>
<div class="tt" style="left:1340px"></div><div class="tl" style="left:1343px">5:00</div>

<!-- bottom right controls -->
<div class="a" style="left:1432px;top:881px;width:16px;height:15px;background:#f0a85a;border:1px solid #222;box-sizing:border-box"><svg width="14" height="13" style="position:absolute;left:0;top:0"><path d="M3 5V8M5 3V10M7 1V12M9 3V10M11 5V8" stroke="#222" stroke-width="1"/></svg></div>
<div class="a" style="left:1451px;top:881px;width:40px;height:15px;background:#222;border:1px solid #151515;box-sizing:border-box"></div>
<div class="a" style="left:1452px;top:882px;width:9px;height:13px;background:#3d7890"></div>
<div class="a" style="left:1453px;top:881px;font-size:11px;color:#ccc;line-height:15px">1.00x</div>
<div class="a" style="left:1503px;top:881px;width:16px;height:15px;background:#222;border:1px solid #151515;box-sizing:border-box;color:#ccc;font-size:11px;line-height:13px;text-align:center">H</div>
<div class="a" style="left:1522px;top:881px;width:17px;height:15px;background:#222;border:1px solid #151515;box-sizing:border-box;color:#ccc;font-size:11px;line-height:13px;text-align:center">W</div>

</div></body></html>
